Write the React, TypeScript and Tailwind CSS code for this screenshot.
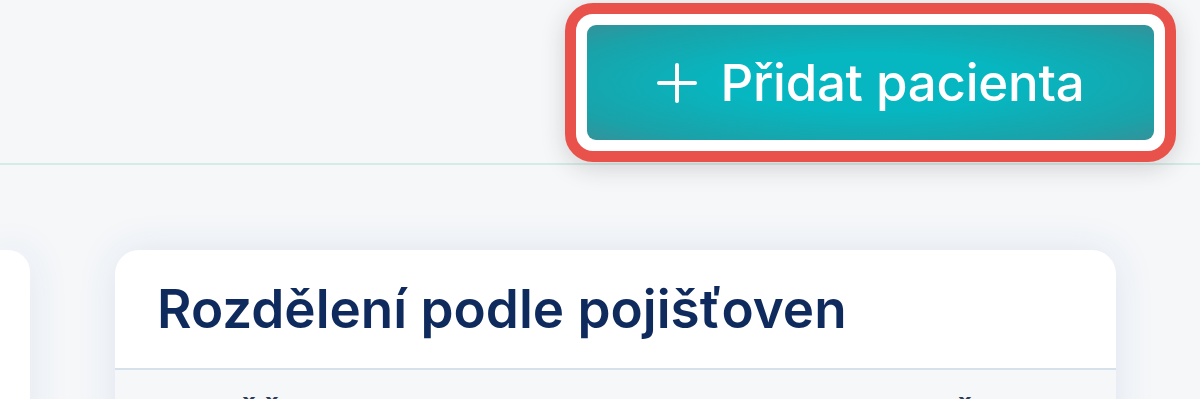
import React from 'react';

const PlusIcon = () => (
  <svg width="42" height="42" viewBox="0 0 42 42" fill="none" stroke="currentColor" strokeWidth="4" strokeLinecap="round">
    <path d="M21 3v36M3 21h36" />
  </svg>
);

export default function App() {
  return (
    <div className="w-[1200px] h-[399px] overflow-hidden bg-[#f5f7f9] font-['Inter',sans-serif]">
      {/* header */}
      <div className="h-[165px] border-b-2 border-[#d4ebe6] flex justify-end items-start pt-[3px] pr-[24px]">
        <div className="rounded-[28px] border-[11px] border-[#e8524a] bg-white p-[11px] shadow-[0_6px_24px_rgba(60,40,40,0.18)]">
          <button className="w-[567px] h-[115px] rounded-[9px] bg-[radial-gradient(ellipse_at_center,#06b7c1_35%,#1aa2a9_80%,#34929a_100%)] text-white flex items-center justify-center gap-[22px]">
            <PlusIcon />
            <span className="text-[51px] font-medium leading-none tracking-[-0.005em]">Přidat pacienta</span>
          </button>
        </div>
      </div>

      {/* content */}
      <div className="flex pt-[85px]">
        <div className="w-[30px] h-[200px] bg-white rounded-tr-[22px] shadow-[0_0_40px_rgba(40,80,160,0.10)]" />
        <div className="ml-[85px] w-[1001px] bg-white rounded-t-[24px] shadow-[0_0_40px_rgba(40,80,160,0.10)] overflow-hidden">
          <div className="h-[120px] px-[42px] flex items-center border-b-2 border-[#d5e2eb]">
            <h2 className="text-[53px] font-semibold text-[#0f2a5c] leading-none tracking-[0em]">
              Rozdělení podle pojišťoven
            </h2>
          </div>
          <div className="bg-[#f5f7f8] h-[200px] pt-[30px] px-[43px] flex text-[33px] leading-none font-semibold tracking-[0.04em] text-[#2c3a5c]">
            <span className="w-[745px]">POJIŠŤOVNA</span>
            <span>POČET</span>
          </div>
        </div>
      </div>
    </div>
  );
}
